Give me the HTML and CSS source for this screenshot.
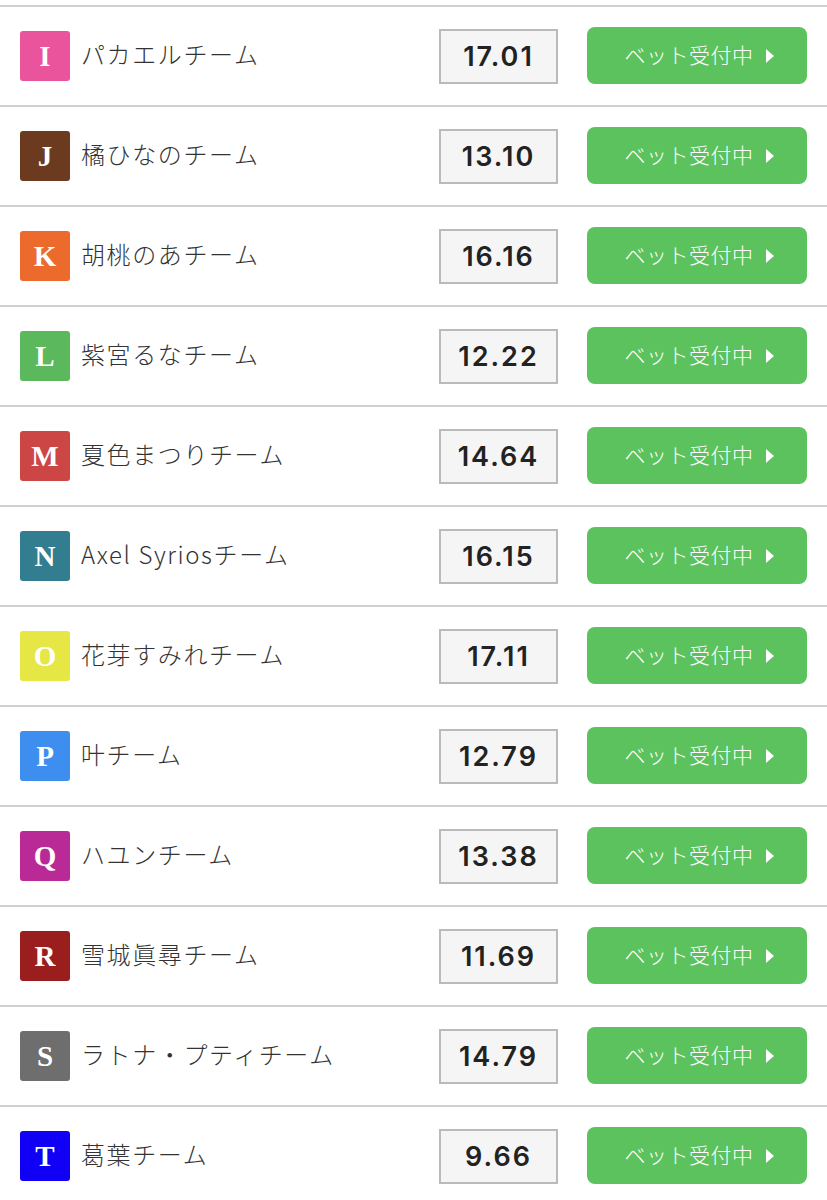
FILE: index.html
```html
<!DOCTYPE html>
<html lang="ja">
  <head>
    <meta charset="UTF-8" />
    <title>チームオッズ</title>
    <link rel="stylesheet" href="styles.css">
  </head>
  <body>
    <ul class="team-list">
      <li class="team-row">
        <span class="badge badge-i">I</span>
        <span class="team-name">パカエルチーム</span>
        <span class="odds">17.01</span>
        <a class="bet-button" href="#">ベット受付中<span class="arrow"></span></a>
      </li>
      <li class="team-row">
        <span class="badge badge-j">J</span>
        <span class="team-name">橘ひなのチーム</span>
        <span class="odds">13.10</span>
        <a class="bet-button" href="#">ベット受付中<span class="arrow"></span></a>
      </li>
      <li class="team-row">
        <span class="badge badge-k">K</span>
        <span class="team-name">胡桃のあチーム</span>
        <span class="odds">16.16</span>
        <a class="bet-button" href="#">ベット受付中<span class="arrow"></span></a>
      </li>
      <li class="team-row">
        <span class="badge badge-l">L</span>
        <span class="team-name">紫宮るなチーム</span>
        <span class="odds">12.22</span>
        <a class="bet-button" href="#">ベット受付中<span class="arrow"></span></a>
      </li>
      <li class="team-row">
        <span class="badge badge-m">M</span>
        <span class="team-name">夏色まつりチーム</span>
        <span class="odds">14.64</span>
        <a class="bet-button" href="#">ベット受付中<span class="arrow"></span></a>
      </li>
      <li class="team-row">
        <span class="badge badge-n">N</span>
        <span class="team-name">Axel Syriosチーム</span>
        <span class="odds">16.15</span>
        <a class="bet-button" href="#">ベット受付中<span class="arrow"></span></a>
      </li>
      <li class="team-row">
        <span class="badge badge-o">O</span>
        <span class="team-name">花芽すみれチーム</span>
        <span class="odds">17.11</span>
        <a class="bet-button" href="#">ベット受付中<span class="arrow"></span></a>
      </li>
      <li class="team-row">
        <span class="badge badge-p">P</span>
        <span class="team-name">叶チーム</span>
        <span class="odds">12.79</span>
        <a class="bet-button" href="#">ベット受付中<span class="arrow"></span></a>
      </li>
      <li class="team-row">
        <span class="badge badge-q">Q</span>
        <span class="team-name">ハユンチーム</span>
        <span class="odds">13.38</span>
        <a class="bet-button" href="#">ベット受付中<span class="arrow"></span></a>
      </li>
      <li class="team-row">
        <span class="badge badge-r">R</span>
        <span class="team-name">雪城眞尋チーム</span>
        <span class="odds">11.69</span>
        <a class="bet-button" href="#">ベット受付中<span class="arrow"></span></a>
      </li>
      <li class="team-row">
        <span class="badge badge-s">S</span>
        <span class="team-name">ラトナ・プティチーム</span>
        <span class="odds">14.79</span>
        <a class="bet-button" href="#">ベット受付中<span class="arrow"></span></a>
      </li>
      <li class="team-row">
        <span class="badge badge-t">T</span>
        <span class="team-name">葛葉チーム</span>
        <span class="odds">9.66</span>
        <a class="bet-button" href="#">ベット受付中<span class="arrow"></span></a>
      </li>
    </ul>
  </body>
</html>
```

FILE: styles.css
```css
body {
  margin: 0;
  background: #fff;
  font-family: 'Noto Sans CJK JP', 'Noto Sans', sans-serif;
  color: #333;
}

.team-list {
  list-style: none;
  margin: 0;
  padding: 5px 0 0 0;
}

.team-row {
  display: flex;
  align-items: center;
  height: 98px;
  padding: 0 20px;
  border-top: 2px solid #d0d0d0;
}

.badge {
  display: flex;
  align-items: center;
  justify-content: center;
  width: 50px;
  height: 50px;
  flex: none;
  border-radius: 3px;
  font-family: 'Liberation Serif', serif;
  font-weight: 700;
  font-size: 29px;
  color: #fff;
}

.badge-i { background: #e9549c; }
.badge-j { background: #6c3a1f; }
.badge-k { background: #ec6a2c; }
.badge-l { background: #5cb85c; }
.badge-m { background: #cc4646; }
.badge-n { background: #327d8f; }
.badge-o { background: #e6e645; }
.badge-p { background: #3e8ef0; }
.badge-q { background: #b92a96; }
.badge-r { background: #9b1e1e; }
.badge-s { background: #6e6e6e; }
.badge-t { background: #1000f5; }

.team-name {
  flex: 1;
  margin-left: 11px;
  margin-bottom: 5px;
  font-size: 24px;
  font-weight: 300;
  letter-spacing: 1.6px;
  color: #333;
  white-space: nowrap;
}

.odds {
  box-sizing: border-box;
  width: 119px;
  height: 55px;
  margin-right: 29px;
  margin-top: 1px;
  display: flex;
  align-items: center;
  justify-content: center;
  background: #f5f5f5;
  border: 2px solid #bababa;
  font-family: Inter, 'Liberation Sans', sans-serif;
  font-weight: 600;
  font-size: 27px;
  letter-spacing: 2px;
  color: #222;
}

.bet-button {
  box-sizing: border-box;
  width: 220px;
  height: 57px;
  display: flex;
  align-items: center;
  justify-content: center;
  background: #5cc25e;
  border-radius: 8px;
  color: #fff;
  text-decoration: none;
  font-size: 21px;
  font-weight: 300;
  letter-spacing: 0.5px;
  padding: 0 0 3px 4px;
  margin-top: -1px;
}

.arrow {
  width: 0;
  height: 0;
  margin-left: 12px;
  margin-top: 3px;
  border-left: 8px solid #fff;
  border-top: 7px solid transparent;
  border-bottom: 7px solid transparent;
}
```
